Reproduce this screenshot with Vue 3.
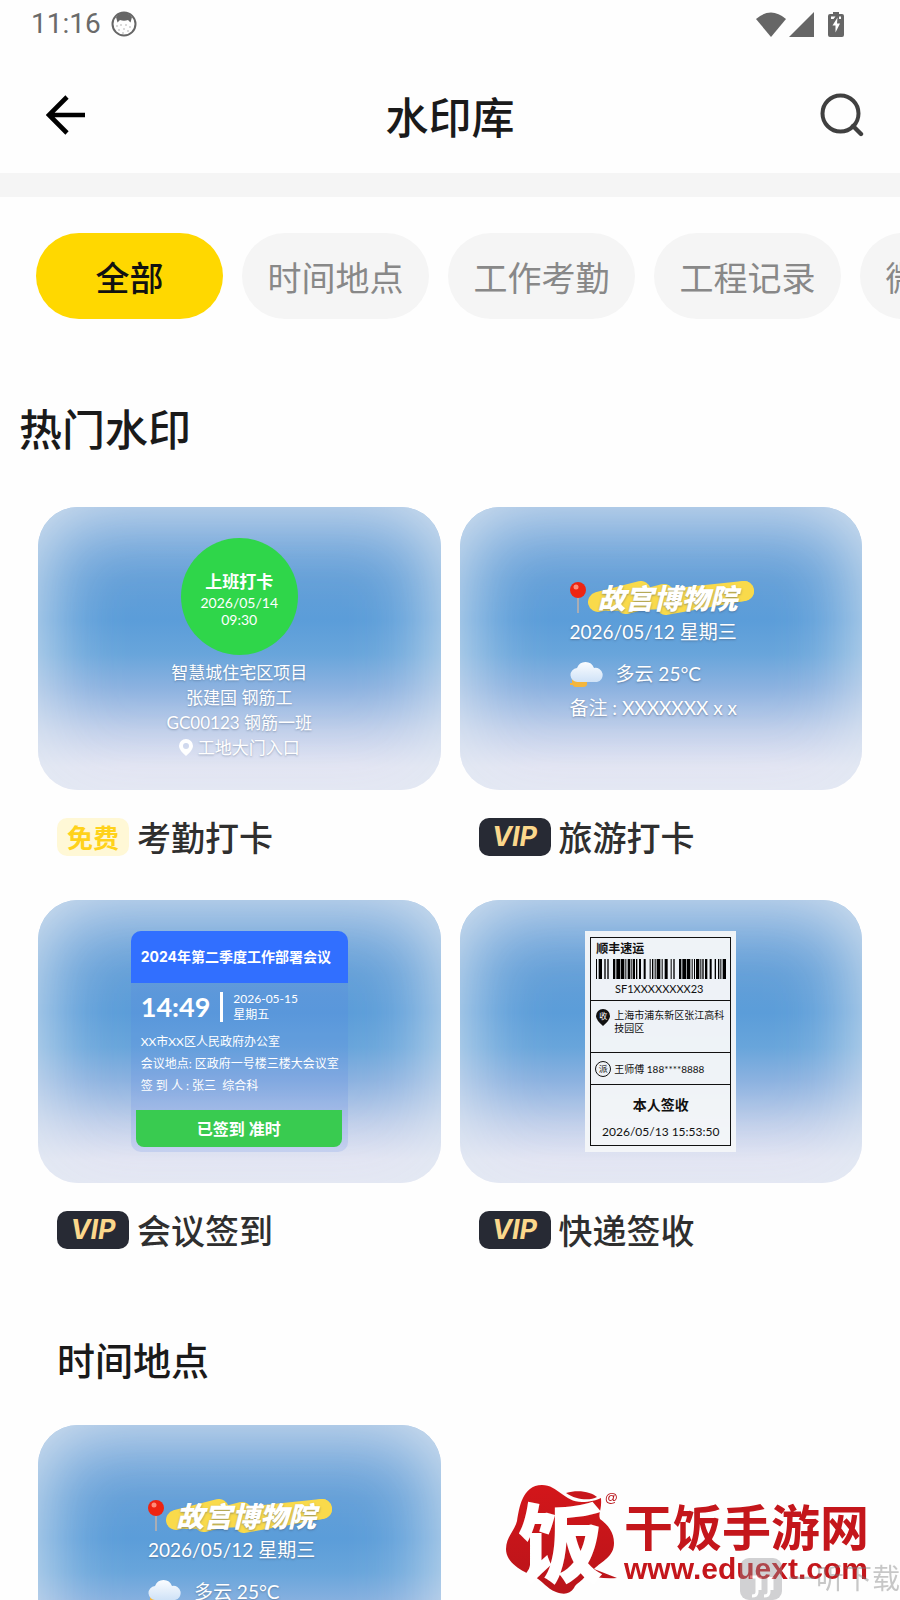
<script setup>
import { ref } from 'vue';

const tabs = ['全部', '时间地点', '工作考勤', '工程记录', '微商水印'];
const activeTab = ref(0);

const sections = [
  {
    title: '热门水印',
    size: 'large',
    items: [
      { name: '考勤打卡', type: 'attendance', free: true },
      { name: '旅游打卡', type: 'travel', free: false },
      { name: '会议签到', type: 'meeting', free: false },
      { name: '快递签收', type: 'express', free: false }
    ]
  },
  {
    title: '时间地点',
    size: 'small',
    items: [{ name: '旅游打卡', type: 'travel', free: false }]
  }
];

// [x, width] of every bar
const bars = [
  [0, 3], [8, 10], [25, 4], [34, 4], [51, 7], [61, 11], [74, 11], [88, 3], [95, 7], [104, 3], [110, 7],
  [120, 4], [129, 6], [143, 6], [161, 3], [168, 4], [176, 3], [182, 11], [197, 3], [206, 9], [224, 3], [232, 4],
  [249, 7], [259, 12], [273, 10], [287, 3], [294, 3], [300, 10], [313, 3], [319, 4], [327, 7], [341, 6],
  [356, 4], [366, 4], [373, 3], [380, 10]
];
</script>

<template>
  <div class="page">
    <div class="status-bar">
      <span class="clock">11:16</span>
      <svg class="cat" viewBox="0 0 26 26">
        <circle cx="13" cy="13" r="11.5" fill="#fff" stroke="#666" stroke-width="2" />
        <path d="M5 6 Q13 -3 21 6 L19.500 11.500 L17 9 Q13 10.500 9 9 L6.500 11.500 Z" fill="#666" />
        <g fill="#999">
          <circle cx="6" cy="15" r=".7" /><circle cx="10" cy="14" r=".7" /><circle cx="15" cy="14" r=".7" />
          <circle cx="19" cy="16" r=".7" /><circle cx="8" cy="19" r=".7" /><circle cx="13" cy="18" r=".7" />
          <circle cx="17" cy="20" r=".7" /><circle cx="12" cy="22" r=".7" />
        </g>
      </svg>
      <span class="spacer"></span>
      <svg class="wifi" viewBox="0 0 30 25">
        <path d="M0 7 Q15 -6 30 7 L15 25 Z" fill="#666" />
      </svg>
      <svg class="signal" viewBox="0 0 25 25">
        <path d="M0 25 L25 0 V25 Z" fill="#666" />
      </svg>
      <svg class="battery" viewBox="0 0 16 25">
        <path d="M5 0 H11 V2 H14 Q16 2 16 4 V23 Q16 25 14 25 H2 Q0 25 0 23 V4 Q0 2 2 2 H5 Z" fill="#666" />
        <path d="M3 4.500 H7.500 L5.500 7 H3 Z M11 4.500 H13 V7 H11 Z M9.500 5.500 L4.500 13.500 H7.500 V20.500 L12 11.500 H9 Z" fill="#fff" />
      </svg>
    </div>

    <header class="header">
      <button class="icon-btn" aria-label="返回">
        <svg class="back" viewBox="0 0 40 40">
          <path d="M21 2 L3 20 L21 38 M3 20 H39" fill="none" stroke="#000" stroke-width="4.600" />
        </svg>
      </button>
      <h1>水印库</h1>
      <button class="icon-btn" aria-label="搜索">
        <svg class="search" viewBox="0 0 44 44">
          <circle cx="20.500" cy="20.500" r="18" fill="none" stroke="#404040" stroke-width="4" />
          <path d="M33 33 L41 41" stroke="#404040" stroke-width="4.400" stroke-linecap="round" />
        </svg>
      </button>
    </header>

    <nav class="tabs">
      <button
        v-for="(tab, index) in tabs"
        :key="tab"
        class="tab"
        :class="{ active: activeTab === index }"
        @click="activeTab = index"
      >{{ tab }}</button>
    </nav>

    <main>
      <section v-for="section in sections" :key="section.title" :class="section.size">
        <h2>{{ section.title }}</h2>
        <div class="grid">
          <article v-for="item in section.items" :key="item.name">
            <div class="card" :class="item.type">
              <template v-if="item.type === 'attendance'">
                <div class="punch">
                  <b>上班打卡</b>
                  <span>2026/05/14</span>
                  <span>09:30</span>
                </div>
                <p>智慧城住宅区项目</p>
                <p>张建国 钢筋工</p>
                <p>GC00123 钢筋一班</p>
                <p class="place">
                  <svg class="place-pin" viewBox="0 0 14 17">
                    <path fill-rule="evenodd" d="M7 0 A7 7 0 0 1 14 7 Q14 11 7 17 Q0 11 0 7 A7 7 0 0 1 7 0 Z M7 4 A3 3 0 1 0 7 10 A3 3 0 1 0 7 4 Z" fill="#fff" />
                  </svg>
                  工地大门入口
                </p>
              </template>

              <template v-else-if="item.type === 'travel'">
                <div class="spot">
                  <svg class="red-pin" viewBox="0 0 16 32">
                    <path d="M8 14 V31" stroke="#a9adb5" stroke-width="2" />
                    <circle cx="8" cy="8" r="8" fill="#ee2411" />
                    <circle cx="6" cy="5" r="2.500" fill="#ff8c78" />
                  </svg>
                  <div class="mark">
                    <svg class="brush" viewBox="0 0 166 34" preserveAspectRatio="none">
                      <g fill="none" stroke="#f9da4b" stroke-width="20" stroke-linecap="round" stroke-linejoin="round">
                        <path d="M10 21 L53 10 L38 23 L76 13 L78 24 L156 10" />
                        <path d="M20 20 L80 18 L156 10" />
                      </g>
                    </svg>
                    <strong>故宫博物院</strong>
                  </div>
                </div>
                <p>2026/05/12 星期三</p>
                <p class="weather">
                  <svg class="cloud" viewBox="0 0 34 28">
                    <defs>
                      <linearGradient id="cloud" x1="0" y1="0" x2="0" y2="1">
                        <stop offset="0" stop-color="#fbfdff" />
                        <stop offset="1" stop-color="#cfe2f7" />
                      </linearGradient>
                    </defs>
                    <path d="M2 19 H17 V24 Q17 27 13 27 H7 Q3 27 3 25 H0 V23 H2 Z" fill="#f4b63d" />
                    <path d="M8 22 A7 7 0 0 1 7 8 A9 9 0 0 1 24 8 A7 7 0 1 1 27 22 Z" fill="url(#cloud)" />
                  </svg>
                  多云 25°C
                </p>
                <p>备注 : XXXXXXX x x</p>
              </template>

              <div v-else-if="item.type === 'meeting'" class="panel">
                <h3>2024年第二季度工作部署会议</h3>
                <div class="when">
                  <b>14:49</b>
                  <div class="day">
                    <span>2026-05-15</span>
                    <span>星期五</span>
                  </div>
                </div>
                <div class="info">
                  <p>XX市XX区人民政府办公室</p>
                  <p>会议地点: 区政府一号楼三楼大会议室</p>
                  <p>签 到 人 : 张三&nbsp; 综合科</p>
                </div>
                <div class="signed">已签到 准时</div>
              </div>

              <div v-else class="label">
                <div class="sheet">
                  <div class="company">
                    <b>顺丰速运</b>
                    <svg class="barcode" viewBox="0 0 390 60" preserveAspectRatio="none">
                      <rect v-for="bar in bars" :key="bar[0]" :x="bar[0]" y="0" :width="bar[1]" height="60" />
                    </svg>
                    <span>SF1XXXXXXXX23</span>
                  </div>
                  <div class="address">
                    <div class="drop">
                      <svg viewBox="0 0 14 17">
                        <path d="M7 0 A7 7 0 0 1 14 7 Q14 11 7 17 Q0 11 0 7 A7 7 0 0 1 7 0 Z" fill="#111" />
                      </svg>
                      <span>收</span>
                    </div>
                    <p>上海市浦东新区张江高科技园区</p>
                  </div>
                  <div class="courier">
                    <span class="ring">派</span>
                    <p>王师傅 188****8888</p>
                  </div>
                  <div class="sign">
                    <b>本人签收</b>
                    <span>2026/05/13 15:53:50</span>
                  </div>
                </div>
              </div>
            </div>
            <div class="caption">
              <span v-if="item.free" class="badge free">免费</span>
              <span v-else class="badge vip">VIP</span>
              <span>{{ item.name }}</span>
            </div>
          </article>
        </div>
      </section>
    </main>

    <div class="site">
      <div class="site-logo">
        <svg viewBox="0 0 112 110">
          <defs>
            <linearGradient id="red" x1="0" y1="0" x2="0" y2="1">
              <stop offset="0" stop-color="#d3161a" />
              <stop offset="1" stop-color="#b9141a" />
            </linearGradient>
          </defs>
          <path d="M36 0 C52 0 58 17 76 17 C84 17 91 15 95 13 C96 25 92 28 94 34 C102 40 108 47 108 58 C108 72 96 76 88 84 L111 93 C98 94 88 92 80 90 C76 97 70 98 68 103 C64 109 58 110 50 107 C40 103 38 97 29 92 C16 86 0 78 0 64 C0 52 9 45 11 36 C13 24 16 0 36 0 Z" fill="url(#red)" />
          <path d="M60 8 C72 4 86 7 91 12 C84 16 70 15 60 8 Z" fill="#c8161b" />
        </svg>
        <span class="site-char">饭</span>
        <span class="site-at">@</span>
      </div>
      <div class="site-name">
        <strong>干饭手游网</strong>
        <span>www.eduext.com</span>
      </div>
    </div>
    <div class="source">
      <svg viewBox="0 0 42 42">
        <rect width="42" height="42" rx="9" fill="#8e8e93" />
        <path d="M10 19 H17 V34 Q17 38 12 38 M20 19 V32 M29 19 V34 Q29 38 24 38 M32 19 V32" fill="none" stroke="#fff" stroke-width="3" />
      </svg>
      <span>一听下载</span>
    </div>
  </div>
</template>

<style>
body {
  margin: 0;
  background: #fefefe;
}
</style>

<style scoped>
.page {
  height: 100vh;
  overflow: hidden;
  background: #fefefe;
  color: #1a1a1a;
  font-family: "Noto Sans CJK SC", sans-serif;
}

h1, h2, h3, p {
  margin: 0;
}

button {
  padding: 0;
  border: none;
  background: none;
  font-family: inherit;
  cursor: pointer;
}

svg {
  display: block;
  flex: none;
}

.status-bar {
  display: flex;
  align-items: center;
  height: 48px;
  padding: 0 56px 8px 31px;
}
.clock {
  margin-right: 10px;
  color: #6a6a6a;
  font: 400 28px/48px Roboto, sans-serif;
}
.cat {
  width: 26px;
  height: 26px;
}
.spacer {
  flex: 1;
}
.wifi {
  width: 30px;
  height: 25px;
}
.signal {
  width: 25px;
  height: 25px;
  margin: 0 14px 0 3px;
}
.battery {
  width: 16px;
  height: 25px;
}

.header {
  display: grid;
  grid-template-columns: 1fr auto 1fr;
  align-items: center;
  height: 117px;
  padding: 0 36px;
  border-bottom: 24px solid #f5f5f5;
}
.header h1 {
  font-size: 43px;
  font-weight: 500;
  line-height: 60px;
}
.icon-btn {
  padding-left: 10px;
}
.icon-btn:last-child {
  justify-self: end;
}
.back {
  width: 40px;
  height: 40px;
}
.search {
  width: 44px;
  height: 44px;
}

.tabs {
  display: flex;
  gap: 19px;
  padding: 36px 0 0 36px;
  overflow: hidden;
}
.tab {
  flex: none;
  width: 187px;
  height: 86px;
  border-radius: 43px;
  background: #f5f5f5;
  color: #888;
  font-size: 34px;
}
.tab.active {
  background: #ffd800;
  color: #111;
  font-weight: 500;
}

.large h2 {
  padding: 78px 19px 50px;
  font-size: 43px;
  font-weight: 500;
  line-height: 60px;
}
.small h2 {
  padding: 84px 57px 40px;
  font-size: 38px;
  font-weight: 500;
  line-height: 52px;
}
.grid {
  display: grid;
  grid-template-columns: 1fr 1fr;
  gap: 44px 19px;
  padding: 0 38px;
}

.card {
  display: flex;
  flex-direction: column;
  align-items: center;
  box-sizing: border-box;
  height: 283px;
  padding-top: 31px;
  border-radius: 40px;
  background: linear-gradient(180deg, #7caadc 0%, #639fd8 26%, #5b9dd9 40%, #68a5db 52%, #8cb2e0 64%, #bfceea 79%, #e3e3f3 92%, #e6e5f4 100%);
  box-shadow: inset 0 0 80px 4px rgba(226, 234, 242, 0.95);
  color: #fff;
  font-family: Lato, "Noto Sans CJK SC", sans-serif;
}
.caption {
  display: flex;
  align-items: center;
  gap: 8px;
  height: 38px;
  margin-top: 28px;
  padding-left: 19px;
  color: #2f2f2f;
  font-size: 34px;
  font-weight: 500;
  line-height: 38px;
}
.badge {
  width: 72px;
  height: 38px;
  border-radius: 10px;
  text-align: center;
}
.free {
  background: #fff8d6;
  color: #ffd21a;
  font-size: 26px;
  font-weight: 700;
}
.vip {
  background: #272a34;
  color: #fbd88c;
  font: italic 700 27px/38px Inter, sans-serif;
}

/* attendance */
.punch {
  display: flex;
  flex-direction: column;
  align-items: center;
  box-sizing: border-box;
  width: 117px;
  height: 117px;
  margin-bottom: 5px;
  padding-top: 32px;
  border-radius: 50%;
  background: #2fd64a;
  font-size: 14px;
  line-height: 17px;
}
.punch b {
  font-size: 17px;
  line-height: 24px;
}
.attendance p {
  font-size: 17px;
  line-height: 25px;
  text-shadow: 0 1px 2px rgba(60, 80, 110, 0.4);
}
.attendance .place {
  display: flex;
  align-items: center;
  gap: 5px;
}
.place-pin {
  width: 14px;
  height: 17px;
}

/* travel */
.travel {
  align-items: flex-start;
  padding: 74px 0 0 110px;
  font-size: 19px;
  line-height: 34px;
  text-shadow: 0 1px 2px rgba(60, 80, 110, 0.5);
}
.spot {
  display: flex;
  align-items: center;
  gap: 2px;
}
.red-pin {
  width: 16px;
  height: 32px;
}
.mark {
  display: grid;
  align-items: center;
}
.mark > * {
  grid-area: 1 / 1;
}
.brush {
  width: 166px;
  height: 34px;
}
.mark strong {
  padding-left: 10px;
  font-size: 28px;
  font-style: italic;
  font-weight: 900;
  line-height: 34px;
}
.weather {
  display: flex;
  align-items: center;
  gap: 12px;
  margin-top: 8px;
}
.cloud {
  width: 34px;
  height: 28px;
}

/* meeting */
.panel {
  width: 217px;
  height: 221px;
  border-radius: 10px;
  background: rgba(80, 125, 230, 0.16);
  overflow: hidden;
}
.panel h3 {
  padding-left: 10px;
  background: #316fff;
  font: 700 14px/52px Inter, "Noto Sans CJK SC", sans-serif;
  white-space: nowrap;
}
.when {
  display: flex;
  align-items: center;
  padding: 8px 10px;
}
.when b {
  padding-right: 10px;
  border-right: 3px solid #fff;
  font-size: 27px;
  font-weight: 700;
  line-height: 30px;
}
.day {
  display: flex;
  flex-direction: column;
  padding-left: 10px;
  font-size: 12px;
  line-height: 16px;
}
.info {
  padding-left: 10px;
  font-size: 12px;
  line-height: 22px;
  white-space: nowrap;
}
.signed {
  margin: 13px 6px 0 5px;
  border-radius: 0 0 8px 8px;
  background: #39cb50;
  font-size: 16px;
  font-weight: 700;
  line-height: 37px;
  text-align: center;
}

/* express */
.label {
  box-sizing: border-box;
  width: 151px;
  padding: 6px 5px;
  background: rgba(244, 246, 248, 0.96);
  color: #111;
  font-size: 10px;
}
.sheet {
  border: 1px solid #111;
}
.sheet > div + div {
  border-top: 1px solid #111;
}
.company {
  display: flex;
  flex-direction: column;
  height: 62px;
  padding: 0 4px 0 5px;
}
.company b {
  font-size: 12px;
  line-height: 21px;
}
.barcode {
  width: 100%;
  height: 20px;
}
.company span {
  padding-right: 4px;
  font-size: 11px;
  line-height: 20px;
  text-align: center;
}
.address {
  display: flex;
  gap: 4px;
  height: 43px;
  padding: 8px 4px 0 5px;
  line-height: 13px;
}
.drop {
  display: grid;
  width: 14px;
  height: 17px;
}
.drop > * {
  grid-area: 1 / 1;
}
.drop svg {
  width: 14px;
  height: 17px;
}
.drop span {
  color: #fff;
  font-size: 8px;
  line-height: 14px;
  text-align: center;
}
.courier {
  display: flex;
  align-items: center;
  gap: 3px;
  height: 31px;
  padding-left: 4px;
}
.ring {
  width: 14px;
  height: 14px;
  border: 1px solid #111;
  border-radius: 50%;
  font-size: 9px;
  line-height: 14px;
  text-align: center;
}
.sign {
  display: flex;
  flex-direction: column;
  height: 61px;
  padding-top: 7px;
  box-sizing: border-box;
  text-align: center;
}
.sign b {
  font-size: 14px;
  line-height: 26px;
}
.sign span {
  font-size: 12px;
  line-height: 28px;
}

/* site marks over the list */
.site {
  position: fixed;
  right: 31px;
  bottom: 5px;
  display: flex;
  gap: 6px;
}
.site-logo {
  display: grid;
  width: 112px;
  height: 110px;
}
.site-logo > * {
  grid-area: 1 / 1;
}
.site-logo svg {
  width: 112px;
  height: 110px;
}
.site-char {
  padding: 2px 0 0 12px;
  color: #fff;
  font-size: 86px;
  font-weight: 900;
  line-height: 104px;
}
.site-at {
  justify-self: end;
  color: #b9141a;
  font: 13px/26px "Liberation Sans", sans-serif;
}
.site-name {
  display: flex;
  flex-direction: column;
  padding-top: 10px;
  color: #c4161b;
}
.site-name strong {
  font-size: 49px;
  font-weight: 700;
  line-height: 60px;
}
.site-name span {
  font: 700 30px/28px "Liberation Sans", sans-serif;
}
.source {
  position: fixed;
  right: 0;
  bottom: 0;
  display: flex;
  gap: 6px;
  opacity: 0.4;
}
.source svg {
  width: 42px;
  height: 42px;
}
.source span {
  color: #777;
  font-size: 28px;
  line-height: 38px;
}
</style>
